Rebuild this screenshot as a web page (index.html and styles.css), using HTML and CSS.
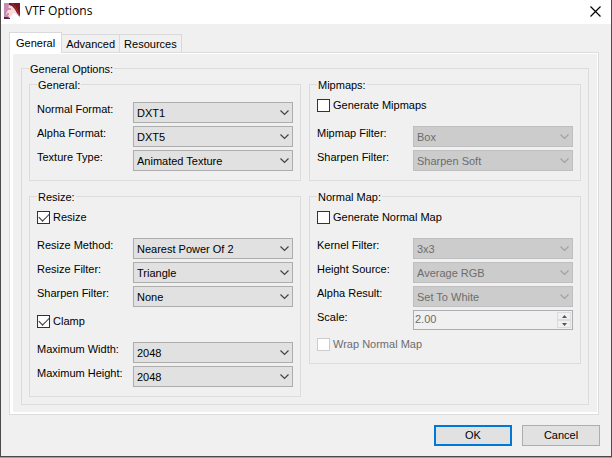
FILE: index.html
```html
<!DOCTYPE html>
<html lang="en">
<head>
    <meta charset="UTF-8">
    <meta name="viewport" content="width=device-width, initial-scale=1.0">
    <title>VTF Options</title>
    <link rel="stylesheet" href="styles.css">
</head>
<body>

    <svg class="symbols" aria-hidden="true">
        <symbol id="chevron" viewBox="0 0 9 6">
            <path d="M0.5 0.5 L4.5 4.5 L8.5 0.5" fill="none" stroke="currentColor" stroke-width="1.2"/>
        </symbol>
    </svg>

    <form class="window">
        <header class="title-bar">
            <svg class="app-icon" viewBox="0 0 16 16" aria-hidden="true">
                <rect width="16" height="16" fill="#c48bb4"/>
                <path d="M5 2 L8 2 L14 12 L12 16 H4 L5 13 L2 11 L4 7 Z" fill="#f8dcdc"/>
                <path d="M5 0 H16 V13 L13 10 L11 6 L8 3 L5 2 Z" fill="#7c1522"/>
                <path d="M8 0 L12 5 L15 11" fill="none" stroke="#a8323c" stroke-width="1"/>
                <path d="M6 14 L10 10 L13 12 L16 14 V16 H6 Z" fill="#fff"/>
                <path d="M0 14 H3 L6 15 V16 H0 Z" fill="#5a2440"/>
                <path d="M4 6 H7" stroke="#b0506a" stroke-width="1"/>
                <path d="M3 11 H5" stroke="#d04860" stroke-width="1"/>
            </svg>
            <h1>VTF Options</h1>
            <button type="button" class="close" aria-label="Close">
                <svg viewBox="0 0 11 11" aria-hidden="true">
                    <path d="M0.5 0.5 L10.5 10.5 M10.5 0.5 L0.5 10.5" stroke="#000" stroke-width="1.2"/>
                </svg>
            </button>
        </header>

        <main class="content">
            <div class="tabs" role="tablist">
                <button type="button" class="tab active" role="tab" aria-selected="true">General</button>
                <button type="button" class="tab" role="tab" aria-selected="false">Advanced</button>
                <button type="button" class="tab" role="tab" aria-selected="false">Resources</button>
            </div>

            <div class="tab-panel" role="tabpanel">
                <div class="tab-page">
                    <fieldset class="options">
                        <legend>General Options:</legend>
                        <div class="columns">
                            <div class="column">
                                <fieldset class="group">
                                    <legend>General:</legend>
                                    <div class="fields first">
                                        <label for="normalFormat">Normal Format:</label>
                                        <div class="dropdown">
                                            <select id="normalFormat"><option>DXT1</option></select>
                                            <svg><use href="#chevron"/></svg>
                                        </div>
                                        <label for="alphaFormat">Alpha Format:</label>
                                        <div class="dropdown">
                                            <select id="alphaFormat"><option>DXT5</option></select>
                                            <svg><use href="#chevron"/></svg>
                                        </div>
                                        <label for="textureType">Texture Type:</label>
                                        <div class="dropdown">
                                            <select id="textureType"><option>Animated Texture</option></select>
                                            <svg><use href="#chevron"/></svg>
                                        </div>
                                    </div>
                                </fieldset>

                                <fieldset class="group">
                                    <legend>Resize:</legend>
                                    <label class="check"><input type="checkbox" checked>Resize</label>
                                    <div class="fields">
                                        <label for="resizeMethod">Resize Method:</label>
                                        <div class="dropdown">
                                            <select id="resizeMethod"><option>Nearest Power Of 2</option></select>
                                            <svg><use href="#chevron"/></svg>
                                        </div>
                                        <label for="resizeFilter">Resize Filter:</label>
                                        <div class="dropdown">
                                            <select id="resizeFilter"><option>Triangle</option></select>
                                            <svg><use href="#chevron"/></svg>
                                        </div>
                                        <label for="resizeSharpen">Sharpen Filter:</label>
                                        <div class="dropdown">
                                            <select id="resizeSharpen"><option>None</option></select>
                                            <svg><use href="#chevron"/></svg>
                                        </div>
                                    </div>
                                    <label class="check"><input type="checkbox" checked>Clamp</label>
                                    <div class="fields">
                                        <label for="maxWidth">Maximum Width:</label>
                                        <div class="dropdown">
                                            <select id="maxWidth"><option>2048</option></select>
                                            <svg><use href="#chevron"/></svg>
                                        </div>
                                        <label for="maxHeight">Maximum Height:</label>
                                        <div class="dropdown">
                                            <select id="maxHeight"><option>2048</option></select>
                                            <svg><use href="#chevron"/></svg>
                                        </div>
                                    </div>
                                </fieldset>
                            </div>

                            <div class="column">
                                <fieldset class="group">
                                    <legend>Mipmaps:</legend>
                                    <label class="check"><input type="checkbox">Generate Mipmaps</label>
                                    <div class="fields">
                                        <label for="mipmapFilter">Mipmap Filter:</label>
                                        <div class="dropdown">
                                            <select id="mipmapFilter" disabled><option>Box</option></select>
                                            <svg><use href="#chevron"/></svg>
                                        </div>
                                        <label for="mipmapSharpen">Sharpen Filter:</label>
                                        <div class="dropdown">
                                            <select id="mipmapSharpen" disabled><option>Sharpen Soft</option></select>
                                            <svg><use href="#chevron"/></svg>
                                        </div>
                                    </div>
                                </fieldset>

                                <fieldset class="group">
                                    <legend>Normal Map:</legend>
                                    <label class="check"><input type="checkbox">Generate Normal Map</label>
                                    <div class="fields">
                                        <label for="kernelFilter">Kernel Filter:</label>
                                        <div class="dropdown">
                                            <select id="kernelFilter" disabled><option>3x3</option></select>
                                            <svg><use href="#chevron"/></svg>
                                        </div>
                                        <label for="heightSource">Height Source:</label>
                                        <div class="dropdown">
                                            <select id="heightSource" disabled><option>Average RGB</option></select>
                                            <svg><use href="#chevron"/></svg>
                                        </div>
                                        <label for="alphaResult">Alpha Result:</label>
                                        <div class="dropdown">
                                            <select id="alphaResult" disabled><option>Set To White</option></select>
                                            <svg><use href="#chevron"/></svg>
                                        </div>
                                        <label for="scale">Scale:</label>
                                        <div class="spinner">
                                            <input type="text" id="scale" value="2.00" disabled>
                                            <div class="spin-buttons">
                                                <button type="button" aria-label="Increase" disabled>
                                                    <svg viewBox="0 0 5 3"><path d="M0 3 L2.5 0 L5 3 Z"/></svg>
                                                </button>
                                                <button type="button" aria-label="Decrease" disabled>
                                                    <svg viewBox="0 0 5 3"><path d="M0 0 L2.5 3 L5 0 Z"/></svg>
                                                </button>
                                            </div>
                                        </div>
                                    </div>
                                    <label class="check last"><input type="checkbox" disabled>Wrap Normal Map</label>
                                </fieldset>
                            </div>
                        </div>
                    </fieldset>
                </div>
            </div>
        </main>

        <footer class="actions">
            <button type="button" class="action default">OK</button>
            <button type="button" class="action">Cancel</button>
        </footer>
    </form>

</body>
</html>
```
FILE: styles.css
```css
* {
    box-sizing: border-box;
}
body {
    margin: 0;
    padding-bottom: 1px;
    background-color: #a0a0a0;
    color: #000;
    font-family: "Liberation Sans", Arial, sans-serif;
    font-size: 11px;
    line-height: 13px;
}
button, input, select {
    margin: 0;
    font: inherit;
    color: inherit;
}
.symbols {
    display: none;
}
.window {
    display: flex;
    flex-direction: column;
    min-height: calc(100vh - 1px);
    background-color: #f0f0f0;
    border: 1px solid #4a4a4a;
    border-top: none;
}

/* title bar */
.title-bar {
    display: flex;
    align-items: center;
    height: 24px;
    padding: 0 10px 2px 3px;
    background-color: #fff;
}
.app-icon {
    width: 16px;
    height: 16px;
}
.title-bar h1 {
    flex: 1;
    margin: 0 0 0 5px;
    font-family: "Open Sans", sans-serif;
    font-size: 12px;
    font-weight: normal;
    line-height: 16px;
}
.close {
    display: flex;
    padding: 0;
    border: none;
    background: none;
}
.close svg {
    width: 11px;
    height: 11px;
}

/* tabs */
.content {
    padding: 8px 12px 0 8px;
}
.tabs {
    display: flex;
    align-items: flex-end;
}
.tab {
    height: 18px;
    padding: 1px 4px 0;
    border: 1px solid #d9d9d9;
    border-left: none;
    border-bottom: none;
    background-color: #f0f0f0;
}
.tab.active {
    position: relative;
    height: 21px;
    margin-bottom: -1px;
    padding: 0 6px;
    border-left: 1px solid #d9d9d9;
    background-color: #fff;
}
.tab-panel {
    padding: 1px 1px 2px 3px;
    border: 1px solid #dcdcdc;
    background-color: #fff;
}
.tab-page {
    padding: 8px 8px 7px;
    background-color: #f0f0f0;
}

/* group boxes */
fieldset {
    min-width: 0;
    margin: 0;
    border: 1px solid #dcdcdc;
}
legend {
    padding: 1px 1px 0;
    line-height: 12px;
}
.options {
    padding: 3px 7px 7px;
}
.columns {
    display: grid;
    grid-template-columns: minmax(0, 1fr) minmax(0, 1fr);
    gap: 8px;
}
.column {
    display: flex;
    flex-direction: column;
    gap: 9px;
}
.group {
    padding: 0 7px 9px;
}
.fields {
    display: grid;
    grid-template-columns: 96px minmax(0, 1fr);
    gap: 3px 0;
}
.fields.first {
    padding-top: 11px;
}
.fields label {
    padding-top: 1px;
}
.check {
    display: flex;
    align-items: center;
    gap: 3px;
    height: 13px;
    margin: 8px 0 14px;
    line-height: 15px;
}
.check.last {
    margin-bottom: 3px;
}
.check:has(:disabled) {
    color: #6d6d6d;
}
.check input {
    display: grid;
    place-items: center;
    width: 13px;
    height: 13px;
    appearance: none;
    border: 1px solid #333;
    background-color: #fff;
}
.check input:checked::before {
    content: "";
    width: 9px;
    height: 5px;
    margin-top: -3px;
    border: solid #333;
    border-width: 0 0 1px 1px;
    transform: rotate(-45deg);
}
.check input:disabled {
    border-color: #ccc;
}

/* drop-downs */
.dropdown {
    position: relative;
}
.dropdown select {
    display: block;
    width: 100%;
    height: 21px;
    padding: 1px 20px 0 3px;
    appearance: none;
    border: 1px solid #adadad;
    border-radius: 0;
    background-color: #e1e1e1;
}
.dropdown svg {
    position: absolute;
    top: 8px;
    right: 4px;
    width: 9px;
    height: 6px;
    color: #444;
    pointer-events: none;
}
.dropdown select:disabled {
    border-color: #bfbfbf;
    background-color: #ccc;
    color: #6d6d6d;
    opacity: 1;
}
.dropdown select:disabled + svg {
    color: #a0a0a0;
}

/* number box */
.spinner {
    display: flex;
    height: 20px;
    padding: 1px;
    border: 1px solid #abadb3;
}
.spinner input {
    flex: 1;
    min-width: 0;
    padding: 0 0 2px;
    border: none;
    background: none;
    color: #6d6d6d;
}
.spin-buttons {
    display: flex;
    flex-direction: column;
    width: 14px;
}
.spin-buttons button {
    display: flex;
    flex: 1;
    align-items: center;
    justify-content: center;
    padding: 0;
    border: 1px solid #dcdcdc;
    background-color: #f0f0f0;
}
.spin-buttons svg {
    width: 5px;
    height: 3px;
    fill: #555;
}

/* bottom buttons */
.actions {
    display: flex;
    justify-content: flex-end;
    gap: 10px;
    padding: 10px 11px;
}
.action {
    width: 78px;
    height: 21px;
    padding: 0;
    border: 1px solid #adadad;
    background-color: #e1e1e1;
}
.action.default {
    border: 2px solid #0078d7;
}
```
